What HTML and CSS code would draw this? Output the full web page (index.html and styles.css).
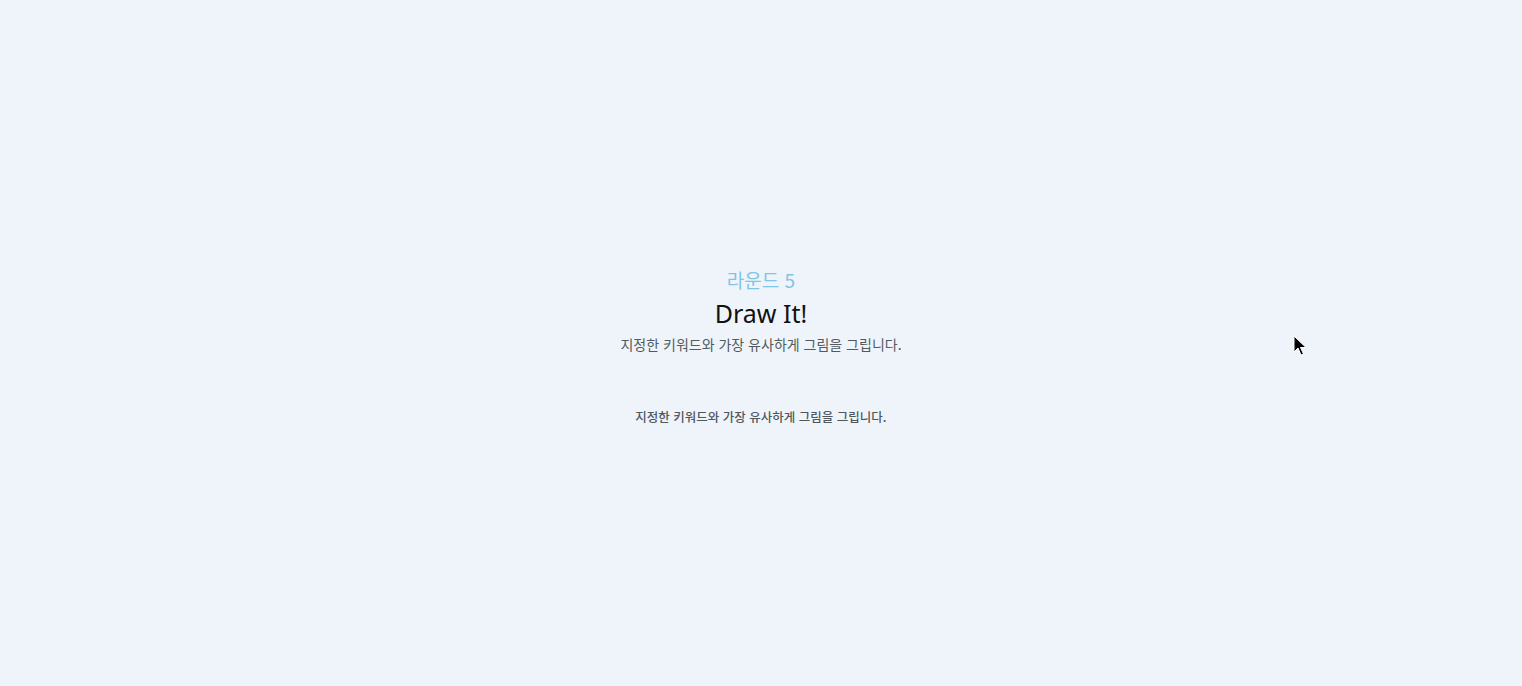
FILE: index.html
```html
<!DOCTYPE html>
<html lang="ko">
<head>
<meta charset="utf-8">
<title>Draw It!</title>
<link rel="stylesheet" href="styles.css">
</head>
<body>
<main class="screen">
  <section class="intro">
    <div class="round">라운드 5</div>
    <h1 class="title">Draw It!</h1>
    <p class="desc">지정한 키워드와 가장 유사하게 그림을 그립니다.</p>
    <p class="hint">지정한 키워드와 가장 유사하게 그림을 그립니다.</p>
  </section>
  <svg class="cursor" width="14" height="22" viewBox="0 0 14 22">
    <path d="M1 1 L1 17 L5 13 L8 20 L10.5 19 L7.5 12.5 L13 12.5 Z" fill="#000" stroke="#fff" stroke-width="1"/>
  </svg>
</main>
</body>
</html>
```
FILE: styles.css
```css
html, body {
  margin: 0;
  padding: 0;
  background: #eff4fb;
}
.screen {
  position: relative;
  width: 100%;
  height: 686px;
  display: flex;
  align-items: center;
  justify-content: center;
  font-family: "Noto Sans", "Noto Sans CJK KR", sans-serif;
}
.intro {
  display: flex;
  flex-direction: column;
  align-items: center;
  text-align: center;
  margin-top: 8px;
}
.round {
  font-family: "Noto Sans CJK KR", sans-serif;
  font-size: 19px;
  color: #7ec5e6;
  line-height: 26px;
}
.title {
  margin: 3px 0 0;
  font-size: 25px;
  font-weight: 400;
  color: #111;
  line-height: 34px;
}
.desc {
  margin: 3px 0 0;
  font-family: "Noto Sans CJK KR", sans-serif;
  font-size: 14px;
  color: #525a5e;
  line-height: 22px;
}
.hint {
  margin: 52px 0 0;
  font-family: "Noto Sans CJK KR", sans-serif;
  font-size: 12.5px;
  font-weight: 500;
  color: #50585e;
  line-height: 20px;
}
.cursor {
  position: absolute;
  left: 1293px;
  top: 335px;
}
```
